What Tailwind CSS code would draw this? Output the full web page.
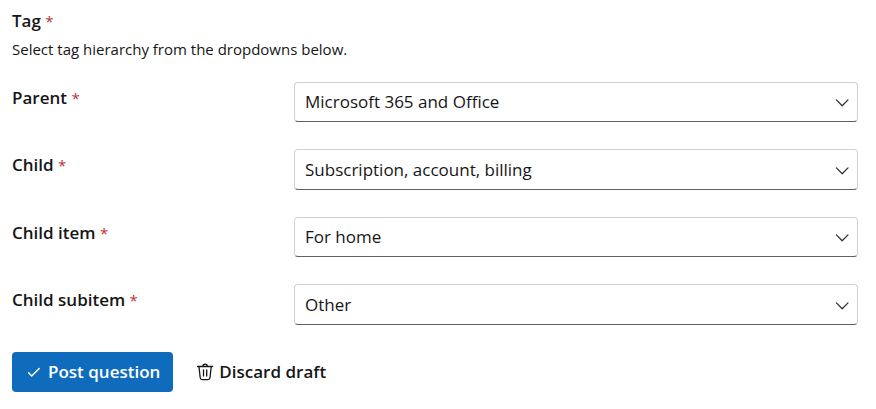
<!DOCTYPE html>
<html lang="en">
<head>
    <meta charset="UTF-8">
    <meta name="viewport" content="width=device-width, initial-scale=1.0">
    <title>Post a question</title>
    <script src="https://cdn.jsdelivr.net/npm/@tailwindcss/browser@4"></script>
</head>
<body class="bg-white text-[#161616] font-['Segoe_UI','Open_Sans',sans-serif]">

    <form class="pl-3 pr-[18px] pt-[9px]">
        <!-- Heading -->
        <h2 class="text-[17px] leading-6 font-semibold">Tag <span class="text-[15px] font-normal text-[#bc2f32]">*</span></h2>
        <p class="mt-1 text-[15px] leading-6">Select tag hierarchy from the dropdowns below.</p>

        <!-- Tag hierarchy -->
        <div class="mt-[21px] flex flex-col gap-[27px] text-[17px]">
            <div class="grid grid-cols-3 items-start">
                <label for="parent" class="pt-1 leading-6 font-semibold">Parent <span class="text-[15px] font-normal text-[#bc2f32]">*</span></label>
                <div class="relative col-span-2">
                    <select id="parent" required class="block h-10 w-full appearance-none rounded border border-[#d1d1d1] border-b-[#616161] bg-white pl-[10px] pr-8">
                        <option>Microsoft 365 and Office</option>
                    </select>
                    <svg class="pointer-events-none absolute right-2 top-3 size-4" viewBox="0 0 16 16" fill="none" stroke="#333" stroke-width="1.3" stroke-linecap="round" stroke-linejoin="round"><path d="M2.4 5.9 8.2 11.7 14 5.9"/></svg>
                </div>
            </div>
            <div class="grid grid-cols-3 items-start">
                <label for="child" class="pt-1 leading-6 font-semibold">Child <span class="text-[15px] font-normal text-[#bc2f32]">*</span></label>
                <div class="relative col-span-2">
                    <select id="child" required class="block h-[41px] w-full appearance-none rounded border border-[#d1d1d1] border-b-[#616161] bg-white pl-[10px] pr-8">
                        <option>Subscription, account, billing</option>
                    </select>
                    <svg class="pointer-events-none absolute right-2 top-[13px] size-4" viewBox="0 0 16 16" fill="none" stroke="#333" stroke-width="1.3" stroke-linecap="round" stroke-linejoin="round"><path d="M2.4 5.9 8.2 11.7 14 5.9"/></svg>
                </div>
            </div>
            <div class="grid grid-cols-3 items-start">
                <label for="child-item" class="pt-1 leading-6 font-semibold">Child item <span class="text-[15px] font-normal text-[#bc2f32]">*</span></label>
                <div class="relative col-span-2">
                    <select id="child-item" required class="block h-10 w-full appearance-none rounded border border-[#d1d1d1] border-b-[#616161] bg-white pl-[10px] pr-8">
                        <option>For home</option>
                    </select>
                    <svg class="pointer-events-none absolute right-2 top-3 size-4" viewBox="0 0 16 16" fill="none" stroke="#333" stroke-width="1.3" stroke-linecap="round" stroke-linejoin="round"><path d="M2.4 5.9 8.2 11.7 14 5.9"/></svg>
                </div>
            </div>
            <div class="grid grid-cols-3 items-start">
                <label for="child-subitem" class="pt-1 leading-6 font-semibold">Child subitem <span class="text-[15px] font-normal text-[#bc2f32]">*</span></label>
                <div class="relative col-span-2">
                    <select id="child-subitem" required class="block h-[41px] w-full appearance-none rounded border border-[#d1d1d1] border-b-[#616161] bg-white pl-[10px] pr-8">
                        <option>Other</option>
                    </select>
                    <svg class="pointer-events-none absolute right-2 top-[13px] size-4" viewBox="0 0 16 16" fill="none" stroke="#333" stroke-width="1.3" stroke-linecap="round" stroke-linejoin="round"><path d="M2.4 5.9 8.2 11.7 14 5.9"/></svg>
                </div>
            </div>
        </div>

        <!-- Actions -->
        <div class="mt-[27px] flex gap-2 text-[17px] font-semibold">
            <button type="submit" class="flex h-10 items-center gap-1 rounded bg-[#0f6cbd] pl-[14px] pr-[13px] text-white">
                <svg class="size-[18px]" viewBox="0 0 18 18" fill="none" stroke="currentColor" stroke-width="1.4" stroke-linecap="round" stroke-linejoin="round"><path d="M2.6 9.8 5.7 12.9 13.2 5.4"/></svg>
                Post question
            </button>
            <button type="button" class="flex h-10 items-center gap-1 rounded pl-[14px] pr-[13px]">
                <svg class="size-5" viewBox="0 0 20 20" fill="none" stroke="currentColor" stroke-width="1.3" stroke-linecap="round" stroke-linejoin="round"><path d="M2.6 4.5h15M7.9 4.3a2.2 2.2 0 0 1 4.4 0M4 4.7 5.2 15.8a2.1 2.1 0 0 0 2.1 1.9h5.6a2.1 2.1 0 0 0 2.1-1.9L16.2 4.7M8.5 8v6M11.7 8v6"/></svg>
                Discard draft
            </button>
        </div>
    </form>

</body>
</html>
